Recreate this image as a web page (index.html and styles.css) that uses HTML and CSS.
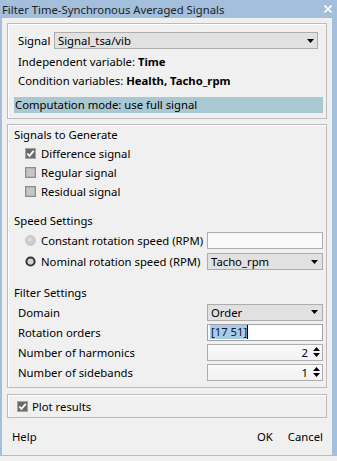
FILE: index.html
```html
<!DOCTYPE html>
<html lang="en">
<head>
    <meta charset="UTF-8">
    <meta name="viewport" content="width=device-width, initial-scale=1.0">
    <title>Filter Time-Synchronous Averaged Signals</title>
    <link rel="stylesheet" href="styles.css">
</head>
<body>
    <div class="window">
        <div class="titlebar">
            <span class="title">Filter Time-Synchronous Averaged Signals</span>
            <svg class="close" width="8" height="8" viewBox="0 0 8 8"><path d="M0.5 0.5L7.5 7.5M7.5 0.5L0.5 7.5" stroke="#fff" stroke-width="1.6"/></svg>
        </div>
        <div class="client">
            <!-- signal info -->
            <div class="panel panel-signal">
                <div class="signal-row">
                    <span class="signal-label">Signal</span>
                    <div class="combo combo-signal">
                        <span>Signal_tsa/vib</span>
                        <svg width="7" height="4" viewBox="0 0 7 4"><path d="M0 0h7L3.5 4z"/></svg>
                    </div>
                </div>
                <div class="info first">Independent variable: <b>Time</b></div>
                <div class="info">Condition variables: <b>Health, Tacho_rpm</b></div>
                <div class="mode">Computation mode: use full signal</div>
            </div>

            <!-- settings -->
            <div class="panel panel-settings">
                <div class="heading">Signals to Generate</div>
                <div class="check-row">
                    <svg class="box" width="11" height="11" viewBox="0 0 11 11"><rect x="0.5" y="0.5" width="10" height="10" fill="#6a6a6a" stroke="#a3a3a3"/><path d="M2.3 5.6l2.2 2.2 4.2-5" stroke="#fff" stroke-width="1.8" fill="none"/></svg>
                    Difference signal
                </div>
                <div class="check-row">
                    <svg class="box" width="11" height="11" viewBox="0 0 11 11"><rect x="0.5" y="0.5" width="10" height="10" fill="#c6c6c6" stroke="#8c8c8c"/><rect x="1.5" y="1.5" width="8" height="8" fill="none" stroke="#b3b3b3"/></svg>
                    Regular signal
                </div>
                <div class="check-row">
                    <svg class="box" width="11" height="11" viewBox="0 0 11 11"><rect x="0.5" y="0.5" width="10" height="10" fill="#c6c6c6" stroke="#8c8c8c"/><rect x="1.5" y="1.5" width="8" height="8" fill="none" stroke="#b3b3b3"/></svg>
                    Residual signal
                </div>

                <div class="heading gap-speed">Speed Settings</div>
                <div class="radio-row">
                    <span class="radio-label">
                        <svg class="box" width="11" height="11" viewBox="0 0 11 11"><circle cx="5.5" cy="5.5" r="4.8" fill="#cdcdcd" stroke="#bdbdbd"/><circle cx="4.6" cy="4.4" r="2.2" fill="#dcdcdc"/></svg>
                        Constant rotation speed (RPM)
                    </span>
                    <div class="edit edit-off"></div>
                </div>
                <div class="radio-row">
                    <span class="radio-label">
                        <svg class="box" width="11" height="11" viewBox="0 0 11 11"><circle cx="5.5" cy="5.5" r="4.1" fill="#d3d3d3" stroke="#333" stroke-width="2"/></svg>
                        Nominal rotation speed (RPM)
                    </span>
                    <div class="combo combo-field">
                        <span>Tacho_rpm</span>
                        <svg width="7" height="4" viewBox="0 0 7 4"><path d="M0 0h7L3.5 4z"/></svg>
                    </div>
                </div>

                <div class="heading gap-filter">Filter Settings</div>
                <div class="field-row">
                    <span>Domain</span>
                    <div class="combo combo-field">
                        <span>Order</span>
                        <svg width="7" height="4" viewBox="0 0 7 4"><path d="M0 0h7L3.5 4z"/></svg>
                    </div>
                </div>
                <div class="field-row">
                    <span>Rotation orders</span>
                    <div class="edit edit-on"><span class="selected">[17 51]</span><span class="caret"></span></div>
                </div>
                <div class="field-row">
                    <span>Number of harmonics</span>
                    <div class="spin">
                        <span>2</span>
                        <svg width="7" height="12" viewBox="0 0 7 12"><path d="M0 5L3.5 1 7 5z M0 7h7L3.5 11z"/></svg>
                    </div>
                </div>
                <div class="field-row">
                    <span>Number of sidebands</span>
                    <div class="spin">
                        <span>1</span>
                        <svg width="7" height="12" viewBox="0 0 7 12"><path d="M0 5L3.5 1 7 5z M0 7h7L3.5 11z"/></svg>
                    </div>
                </div>
            </div>

            <div class="panel panel-plot">
                <svg class="box" width="11" height="11" viewBox="0 0 11 11"><rect x="0.5" y="0.5" width="10" height="10" fill="#6a6a6a" stroke="#a3a3a3"/><path d="M2.3 5.6l2.2 2.2 4.2-5" stroke="#fff" stroke-width="1.8" fill="none"/></svg>
                Plot results
            </div>

            <div class="footer">
                <span>Help</span>
                <span class="buttons"><span>OK</span><span>Cancel</span></span>
            </div>
        </div>
        <div class="bottom-edge"></div>
    </div>
</body>
</html>
```

FILE: styles.css
```css
/* styles.css */
body {
    margin: 0;
    font-family: "Noto Sans", sans-serif;
    font-size: 11.3px;
    color: #000;
    background-color: #f0f0f0;
}

.window {
    width: 337px;
    height: 461px;
    background-color: #a3bfdc;
    display: flex;
    flex-direction: column;
    white-space: nowrap;
}

.titlebar {
    height: 18px;
    display: flex;
    align-items: center;
    justify-content: space-between;
    padding: 0 5px 0 2px;
    color: #222;
}

.client {
    height: 437px;
    margin: 0 5px 0 2px;
    padding: 5px 5px 0;
    box-sizing: border-box;
    background-color: #f0f0f0;
    display: flex;
    flex-direction: column;
}

.bottom-edge {
    flex: 1;
    border-top: 1px solid #a3bfdc;
    background-color: #f0f0f0;
}

.panel {
    border: 1px solid #bcbcbc;
    box-shadow: inset 1px 1px 0 #fff;
}

.panel-signal {
    padding: 8px 3px 5px 6px;
}

.signal-row {
    display: flex;
    align-items: center;
    height: 17px;
    padding: 0 5px 0 4px;
}

.signal-label {
    width: 36px;
}

.combo {
    height: 17px;
    box-sizing: border-box;
    border: 1px solid #adadad;
    background-color: #e1e1e1;
    display: flex;
    align-items: center;
    justify-content: space-between;
    padding: 0 4px 0 3px;
}

.combo-signal {
    flex: 1;
    padding-right: 3px;
}

.info {
    line-height: 19px;
    padding-left: 4px;
}

.info.first {
    margin-top: 3px;
}

.mode {
    margin-top: 7px;
    height: 16px;
    line-height: 16px;
    padding-left: 1px;
    background-color: #a9c8d2;
}

.panel-settings {
    margin-top: 5px;
    padding: 1px 3px 5px 6px;
}

.heading {
    line-height: 18px;
}

.gap-speed {
    margin-top: 11px;
}

.gap-filter {
    margin-top: 12px;
}

.check-row {
    height: 19px;
    display: flex;
    align-items: center;
    gap: 5px;
    padding-left: 11px;
}

.box {
    flex: none;
}

.radio-row {
    height: 21px;
    display: flex;
    align-items: center;
    justify-content: space-between;
    padding-left: 11px;
}

.radio-label {
    display: flex;
    align-items: center;
    gap: 5px;
}

.field-row {
    height: 20px;
    display: flex;
    align-items: center;
    justify-content: space-between;
    padding-left: 4px;
}

.combo-field,
.edit,
.spin {
    width: 116px;
    flex: none;
}

.edit {
    height: 17px;
    box-sizing: border-box;
    border: 1px solid #adadad;
    display: flex;
    align-items: center;
    padding-left: 2px;
}

.edit-off {
    background-color: #f9f9f9;
}

.edit-on {
    background-color: #fff;
    border-color: #a2a2a2;
}

.selected {
    background-color: #a8cce6;
    color: #10103a;
    line-height: 14px;
    padding-left: 1px;
}

.caret {
    width: 1px;
    height: 14px;
    background-color: #000;
}

.spin {
    height: 17px;
    box-sizing: border-box;
    border: 1px solid #adadad;
    background: linear-gradient(#fafafa, #f1f1f1);
    display: flex;
    align-items: center;
    justify-content: flex-end;
    gap: 5px;
    padding-right: 2px;
}

.panel-plot {
    margin-top: 6px;
    height: 24px;
    box-sizing: border-box;
    display: flex;
    align-items: center;
    gap: 4px;
    padding-left: 9px;
}

.footer {
    flex: 1;
    display: flex;
    align-items: center;
    justify-content: space-between;
    padding: 0 4px 0 5px;
}

.buttons {
    display: flex;
    gap: 15px;
}
```
